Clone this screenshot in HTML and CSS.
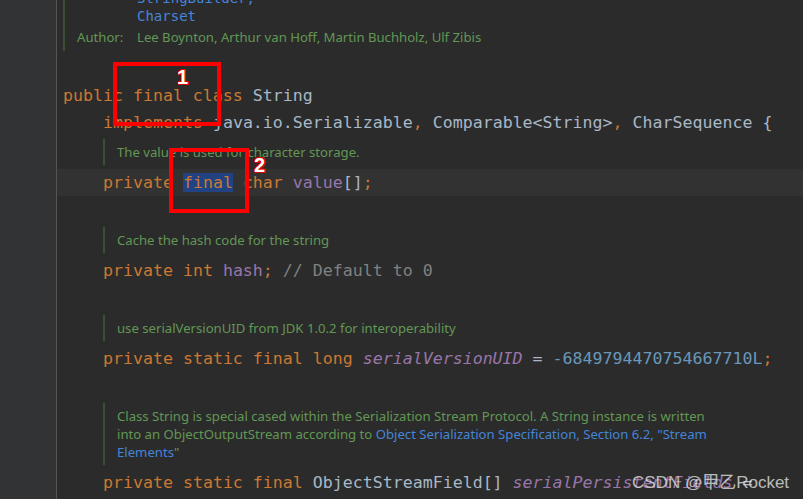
FILE: index.html
```html
<!DOCTYPE html>
<html lang="en">
<head>
    <meta charset="UTF-8">
    <meta name="viewport" content="width=device-width, initial-scale=1.0">
    <title>String.java</title>
    <link rel="stylesheet" href="styles.css">
</head>
<body>
    <div class="ide">
        <div class="gutter"></div>
        <div class="editor">
            <div class="doc doc-top">
                <div class="doc-ref">StringBuilder,</div>
                <div class="doc-ref">Charset</div>
                <div class="doc-author"><span class="doc-label">Author:</span><span>Lee Boynton, Arthur van Hoff, Martin Buchholz, Ulf Zibis</span></div>
            </div>
            <div class="line"></div>
            <div class="line"><span class="kw">public final class </span>String</div>
            <div class="line ind"><span class="kw">implements </span>java.io.Serializable<span class="kw">, </span>Comparable&lt;String&gt;<span class="kw">, </span>CharSequence {</div>

            <div class="doc doc-ind doc-first">The value is used for character storage.</div>
            <div class="line ind current"><span class="kw">private </span><span class="kw sel">final</span><span class="kw"> char </span><span class="field">value</span>[]<span class="kw">;</span></div>
            <div class="line"></div>

            <div class="doc doc-ind">Cache the hash code for the string</div>
            <div class="line ind"><span class="kw">private int </span><span class="field">hash</span><span class="kw">; </span><span class="cmt">// Default to 0</span></div>
            <div class="line"></div>

            <div class="doc doc-ind">use serialVersionUID from JDK 1.0.2 for interoperability</div>
            <div class="line ind"><span class="kw">private static final long </span><span class="field static">serialVersionUID</span> = <span class="num">-6849794470754667710L</span><span class="kw">;</span></div>
            <div class="line"></div>

            <div class="doc doc-ind">Class String is special cased within the Serialization Stream Protocol. A String instance is written<br>into an ObjectOutputStream according to <a href="#" class="doc-link">Object Serialization Specification, Section 6.2, "Stream<br>Elements</a>"</div>
            <div class="line ind"><span class="kw">private static final </span>ObjectStreamField[] <span class="field static">serialPersistentFields</span> =</div>
        </div>

        <!-- annotations drawn over the screenshot -->
        <div class="mark mark-one"></div>
        <div class="mark-label label-one">1</div>
        <div class="mark mark-two"></div>
        <div class="mark-label label-two">2</div>
        <div class="watermark">CSDN @甲乙Rocket</div>
    </div>
</body>
</html>
```

FILE: styles.css
```css
body {
    margin: 0;
    padding: 0;
    background-color: #2b2b2b;
    overflow: hidden;
}

.ide {
    position: relative;
    display: flex;
    height: 499px;
    overflow: hidden;
}

.gutter {
    flex: none;
    width: 56px;
    background-color: #313335;
    border-right: 1px solid #555555;
}

.editor {
    flex: 1;
    min-width: 0;
    font-family: "DejaVu Sans Mono", monospace;
    font-size: 16.6px;
    color: #a9b7c6;
}

.line {
    height: 27px;
    line-height: 27px;
    padding-left: 6px;
    white-space: pre;
}

.line.ind {
    padding-left: 46px;
}

.line.current {
    background-color: #323232;
}

.kw {
    color: #cc7832;
}

.field {
    color: #9876aa;
}

.static {
    font-style: italic;
}

.cmt {
    color: #808080;
}

.num {
    color: #6897bb;
}

.sel {
    background-color: #214283;
}

/* rendered javadoc blocks */
.doc {
    margin: 4px 0 4px 6px;
    padding: 4px 0 4px 12px;
    border-left: 2px solid #3b5034;
    font-family: "Noto Sans", "Open Sans", sans-serif;
    font-size: 13.15px;
    line-height: 18px;
    color: #629755;
    white-space: nowrap;
}

.doc-ind {
    margin-left: 46px;
}

.doc-first {
    margin-top: 3px;
}

.doc-top {
    margin-top: -11px;
    padding-top: 0;
    padding-bottom: 2px;
}

.doc-ref {
    height: 18px;
    padding-left: 60px;
    font-family: "DejaVu Sans Mono", monospace;
    font-size: 14px;
    color: #4585d6;
}

.doc-author {
    display: flex;
    align-items: center;
    height: 24px;
}

.doc-label {
    width: 60px;
}

.doc-link {
    color: #4585d6;
    text-decoration: none;
}

.mark {
    position: absolute;
    border: 4px solid #ff0000;
    box-sizing: border-box;
}

.mark-one {
    left: 113px;
    top: 62px;
    width: 108px;
    height: 64px;
}

.mark-two {
    left: 169px;
    top: 148px;
    width: 80px;
    height: 65px;
}

.mark-label {
    position: absolute;
    font-family: "Liberation Sans", Arial, sans-serif;
    font-weight: bold;
    font-size: 20px;
    line-height: 20px;
    color: #ffffff;
    text-shadow: -1px -1px 0 #e00000, 1px -1px 0 #e00000, -1px 1px 0 #e00000, 1px 1px 0 #e00000;
}

.label-one {
    left: 177px;
    top: 67px;
}

.label-two {
    left: 254px;
    top: 155px;
}

.watermark {
    position: absolute;
    left: 632px;
    top: 472px;
    font-family: "Liberation Sans", "Noto Sans CJK SC", sans-serif;
    font-size: 17px;
    line-height: 22px;
    color: rgba(225, 225, 225, 0.8);
    white-space: nowrap;
}
```
